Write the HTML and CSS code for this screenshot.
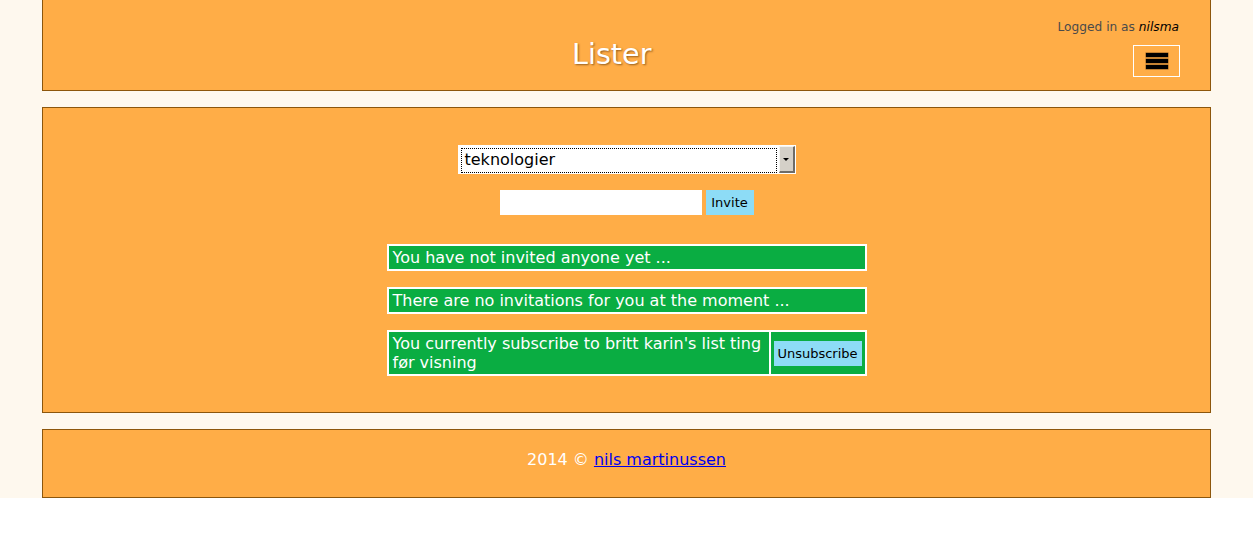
FILE: index.html
```html
<!DOCTYPE html>
<html>
<head>
<meta charset="utf-8">
<title>Lister</title>
<link rel="stylesheet" href="styles.css">
</head>
<body>
<div class="page">
  <header class="panel header">
    <h1 class="title">Lister</h1>
    <div class="user">
      <div class="logged">Logged in as <em>nilsma</em></div>
      <button class="menu" type="button" aria-label="Menu"><span></span><span></span><span></span></button>
    </div>
  </header>

  <main class="panel main">
    <div class="select">
      <div class="select-value">teknologier</div>
      <div class="select-btn"><span class="arrow"></span></div>
    </div>
    <form class="invite">
      <input class="invite-input" type="text">
      <button class="btn" type="button">Invite</button>
    </form>
    <div class="box"><div class="cell">You have not invited anyone yet ...</div></div>
    <div class="box"><div class="cell">There are no invitations for you at the moment ...</div></div>
    <div class="box">
      <div class="cell grow">You currently subscribe to britt karin's list ting før visning</div>
      <div class="action"><button class="btn wide" type="button">Unsubscribe</button></div>
    </div>
  </main>

  <footer class="panel footer">2014 © <a href="#">nils martinussen</a></footer>
</div>
</body>
</html>
```
FILE: styles.css
```css
html, body {
  margin: 0;
  padding: 0;
  background: #ffffff;
}
body {
  font-family: "DejaVu Sans", Verdana, sans-serif;
}
.page {
  background: #fef8ee;
  padding: 0 42px;
  height: 498px;
  box-sizing: border-box;
}
.panel {
  background: #ffad47;
  border: 1px solid #8c560c;
}
.header {
  border-top: none;
  height: 90px;
  display: flex;
  padding-right: 30px;
}
.title {
  flex: 1;
  margin: 0;
  padding: 36px 0 0 123px;
  text-align: center;
  font-weight: normal;
  font-size: 28.6px;
  line-height: 36px;
  color: #ffffff;
  text-shadow: 1px 1px 2px rgba(80, 40, 0, 0.6);
}
.user {
  display: flex;
  flex-direction: column;
  align-items: flex-end;
  padding-top: 19px;
}
.logged {
  font-size: 12.2px;
  line-height: 16px;
  color: #4a4a4a;
  padding-right: 1px;
}
.logged em {
  color: #000;
}
.menu {
  margin-top: 10px;
  width: 47px;
  height: 32px;
  background: transparent;
  border: 1px solid #ffffff;
  padding: 0;
  display: flex;
  flex-direction: column;
  align-items: center;
  justify-content: center;
  gap: 2px;
}
.menu span {
  display: block;
  width: 22px;
  height: 4px;
  background: #000;
  box-shadow: 0 0 0 0.5px #8a5a20;
}
.main {
  margin-top: 16px;
  padding: 37px 0 36px;
  display: flex;
  flex-direction: column;
  align-items: center;
}
.select {
  width: 338px;
  height: 29px;
  box-sizing: border-box;
  background: #fff;
  display: flex;
  padding: 1px;
  font-size: 16px;
}
.select-value {
  flex: 1;
  margin: 2px 2px 0 2px;
  border: 1px dotted #000;
  padding: 0 3px;
  line-height: 22px;
  color: #000;
}
.select-btn {
  width: 16px;
  box-sizing: border-box;
  background: #d4d0c8;
  border-top: 1px solid #f4f4f0;
  border-left: 1px solid #f4f4f0;
  border-right: 2px solid #6e6c68;
  border-bottom: 2px solid #6e6c68;
  display: flex;
  align-items: center;
  justify-content: center;
}
.arrow {
  width: 0;
  height: 0;
  border-left: 3px solid transparent;
  border-right: 3px solid transparent;
  border-top: 3px solid #000;
}
.invite {
  margin: 16px 0 29px;
  display: flex;
  gap: 4px;
}
.invite-input {
  width: 202px;
  height: 25px;
  box-sizing: border-box;
  border: none;
  padding: 0 4px;
  margin: 0;
  background: #fff;
}
.btn {
  height: 25px;
  width: 48px;
  border: none;
  margin: 0;
  padding: 0;
  background: #8ddcf6;
  color: #000;
  font-family: "DejaVu Sans", Verdana, sans-serif;
  font-size: 13px;
}
.btn.wide {
  width: 88px;
}
.box {
  width: 480px;
  box-sizing: border-box;
  border: 2px solid #fff;
  background: #0aad42;
  color: #fff;
  display: flex;
  font-size: 16px;
  line-height: 19px;
  margin-bottom: 16px;
}
.box:last-child {
  margin-bottom: 0;
}
.cell {
  padding: 2px 4px;
}
.cell.grow {
  flex: 1;
}
.action {
  flex: none;
  border-left: 2px solid #fff;
  padding: 0 3px;
  display: flex;
  align-items: center;
}
.footer {
  margin-top: 16px;
  height: 47px;
  padding-top: 20px;
  text-align: center;
  font-size: 16px;
  line-height: 19px;
  color: #fff;
}
.footer a {
  color: #0000ee;
}
```
